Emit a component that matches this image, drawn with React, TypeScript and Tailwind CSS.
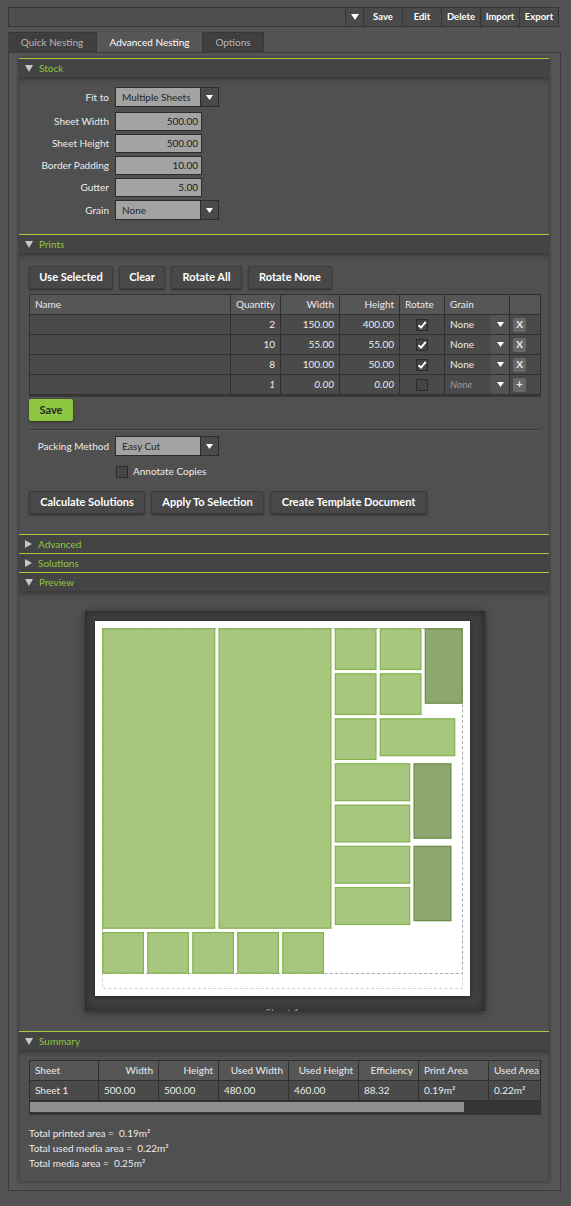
import React from "react";

type Piece = { x: number; y: number; w: number; h: number; rot?: boolean };

// nesting result in sheet millimetres (sheet is 500 x 500)
const pieces: Piece[] = [
  { x: 10, y: 10, w: 150, h: 400 },
  { x: 165, y: 10, w: 150, h: 400 },
  { x: 320, y: 10, w: 55, h: 55 },
  { x: 380, y: 10, w: 55, h: 55 },
  { x: 320, y: 70, w: 55, h: 55 },
  { x: 380, y: 70, w: 55, h: 55 },
  { x: 320, y: 130, w: 55, h: 55 },
  { x: 380, y: 130, w: 100, h: 50 },
  { x: 440, y: 10, w: 50, h: 100, rot: true },
  { x: 320, y: 190, w: 100, h: 50 },
  { x: 320, y: 245, w: 100, h: 50 },
  { x: 320, y: 300, w: 100, h: 50 },
  { x: 320, y: 355, w: 100, h: 50 },
  { x: 425, y: 190, w: 50, h: 100, rot: true },
  { x: 425, y: 300, w: 50, h: 100, rot: true },
  { x: 10, y: 415, w: 55, h: 55 },
  { x: 70, y: 415, w: 55, h: 55 },
  { x: 130, y: 415, w: 55, h: 55 },
  { x: 190, y: 415, w: 55, h: 55 },
  { x: 250, y: 415, w: 55, h: 55 },
];

const prints = [
  { qty: "2", w: "150.00", h: "400.00" },
  { qty: "10", w: "55.00", h: "55.00" },
  { qty: "8", w: "100.00", h: "50.00" },
];

function DownTri({ c = "#ffffff", w = 8, h = 6 }: { c?: string; w?: number; h?: number }) {
  return (
    <svg width={w} height={h} viewBox={`0 0 ${w} ${h}`}>
      <path d={`M0 0H${w}L${w / 2} ${h}Z`} fill={c} />
    </svg>
  );
}

function RightTri() {
  return (
    <svg width="7" height="8" viewBox="0 0 7 8">
      <path d="M0 0L7 4L0 8Z" fill="#c8c8c8" />
    </svg>
  );
}

function Check({ on }: { on?: boolean }) {
  return (
    <span className="flex h-[12px] w-[12px] items-center justify-center border border-[#2b2b2b] bg-[#454545]">
      {on && (
        <svg width="10" height="10" viewBox="0 0 10 10">
          <path d="M1.5 5.2L4 7.6L8.8 1.8" stroke="#fff" strokeWidth="2" fill="none" />
        </svg>
      )}
    </span>
  );
}

function Section({ title, open = true, h, children }: { title: string; open?: boolean; h?: string; children?: React.ReactNode }) {
  return (
    <div>
      <div className="flex h-[19px] items-center gap-[6px] border-t border-[#a3cc3a] bg-[#444444] pl-[6px] text-[#8dc63f]">
        {open ? <DownTri c="#c8c8c8" w={8} h={7} /> : <RightTri />}
        <span>{title}</span>
      </div>
      {open && <div className={`bg-[#505050] shadow-[inset_0_5px_5px_-3px_rgba(0,0,0,0.35)] ${h}`}>{children}</div>}
    </div>
  );
}

function Select({ value }: { value: string }) {
  return (
    <div className="flex h-[20px] w-[104px] border border-[#2c2c2c]">
      <div className="flex flex-1 items-center bg-[#a3a3a3] pl-[6px] text-[#262626]">{value}</div>
      <div className="flex w-[18px] items-center justify-center border-l border-[#2c2c2c] bg-[#4a4a4a]">
        <DownTri w={7} h={5} />
      </div>
    </div>
  );
}

function Field({ value }: { value: string }) {
  return (
    <div className="flex h-[19px] w-[87px] items-center justify-end border border-[#2c2c2c] bg-[#a3a3a3] pr-[3px] text-[#1c1c1c]">
      {value}
    </div>
  );
}

function Row({ label, children, className = "" }: { label: string; children: React.ReactNode; className?: string }) {
  return (
    <div className={`flex items-center gap-[6px] ${className}`}>
      <div className="w-[90px] text-right">{label}</div>
      {children}
    </div>
  );
}

function Btn({ w, children }: { w: string; children: React.ReactNode }) {
  return (
    <div
      className={`flex h-[23px] ${w} items-center justify-center rounded-[2px] border border-[#3c3c3c] bg-[#484848] text-[11px] font-bold text-white shadow-[0_1px_2px_rgba(0,0,0,0.45)]`}
    >
      {children}
    </div>
  );
}

const cell = "flex h-[20px] items-center whitespace-nowrap border-r border-b border-[#303030] px-[5px]";

function PrintsTable() {
  return (
    <div className="grid w-[512px] grid-cols-[201px_50px_59px_60px_45px_65px_31px] border-l border-t border-[#303030] shadow-[0_2px_0_#3a3a3a]">
      <div className={`${cell} bg-[#565656]`}>Name</div>
      <div className={`${cell} justify-end bg-[#565656]`}>Quantity</div>
      <div className={`${cell} justify-end bg-[#565656]`}>Width</div>
      <div className={`${cell} justify-end bg-[#565656]`}>Height</div>
      <div className={`${cell} bg-[#565656]`}>Rotate</div>
      <div className={`${cell} bg-[#565656]`}>Grain</div>
      <div className={`${cell} bg-[#565656]`} />

      {prints.map((p) => (
        <React.Fragment key={p.qty}>
          <div className={`${cell} bg-[#4a4a4a]`} />
          <div className={`${cell} justify-end bg-[#4a4a4a]`}>{p.qty}</div>
          <div className={`${cell} justify-end bg-[#4a4a4a]`}>{p.w}</div>
          <div className={`${cell} justify-end bg-[#4a4a4a]`}>{p.h}</div>
          <div className={`${cell} justify-center bg-[#4a4a4a]`}>
            <Check on />
          </div>
          <div className={`${cell} !pr-0 bg-[#4a4a4a]`}>
            <span className="flex-1">None</span>
            <span className="flex h-full w-[18px] items-center justify-center bg-[#535353]">
              <DownTri w={7} h={5} />
            </span>
          </div>
          <div className={`${cell} !px-[3px] bg-[#4a4a4a]`}>
            <span className="flex h-[14px] w-[13px] items-center justify-center rounded-[2px] bg-[#676767] text-[10px] font-bold">X</span>
          </div>
        </React.Fragment>
      ))}

      <div className={`${cell} bg-[#4a4a4a]`} />
      <div className={`${cell} justify-end bg-[#4a4a4a]`}>
        <em className="italic">1</em>
      </div>
      <div className={`${cell} justify-end bg-[#4a4a4a]`}>
        <em className="italic">0.00</em>
      </div>
      <div className={`${cell} justify-end bg-[#4a4a4a]`}>
        <em className="italic">0.00</em>
      </div>
      <div className={`${cell} justify-center bg-[#4a4a4a]`}>
        <Check />
      </div>
      <div className={`${cell} !pr-0 bg-[#4a4a4a]`}>
        <em className="flex-1 italic text-[#9a9a9a]">None</em>
        <span className="flex h-full w-[18px] items-center justify-center bg-[#535353]">
          <DownTri w={7} h={5} />
        </span>
      </div>
      <div className={`${cell} !px-[3px] bg-[#4a4a4a]`}>
        <span className="flex h-[14px] w-[13px] items-center justify-center rounded-[2px] bg-[#676767] text-[11px] font-bold">+</span>
      </div>
    </div>
  );
}

function SheetPreview() {
  return (
    <div className="ml-[66px] h-[400px] w-[400px] overflow-hidden bg-[#404040] pt-[10px] shadow-[inset_0_0_10px_rgba(0,0,0,0.45),0_2px_8px_rgba(0,0,0,0.45)]">
      <div className="ml-[10px] h-[375px] w-[375px] bg-white shadow-[0_1px_4px_rgba(0,0,0,0.5)]">
        <svg width="375" height="375" viewBox="0 0 500 500">
          <rect x="10" y="10" width="480" height="480" fill="none" stroke="#cfcfcf" strokeWidth="1.3" strokeDasharray="4 3" />
          <rect x="10" y="10" width="480" height="460" fill="none" stroke="#a8a8a8" strokeWidth="1.3" strokeDasharray="4 3" />
          {pieces.map((p, i) => (
            <rect
              key={i}
              x={p.x + 0.4}
              y={p.y + 0.4}
              width={p.w - 0.8}
              height={p.h - 0.8}
              fill={p.rot ? "#8ea66f" : "#a6c77d"}
              stroke={p.rot ? "#6b8a44" : "#86b24f"}
              strokeWidth="1.6"
            />
          ))}
        </svg>
      </div>
      <div className="ml-[10px] mt-[9px] w-[375px] text-center text-[#9a9a9a]">Sheet 1</div>
    </div>
  );
}

const sumHead = "flex h-[20px] items-center whitespace-nowrap border-r border-b border-[#303030] bg-[#565656] px-[5px]";
const sumCell = "flex h-[20px] items-center whitespace-nowrap border-r border-b border-[#303030] bg-[#4a4a4a] px-[5px]";

function SummaryTable() {
  return (
    <div className="w-[512px] overflow-hidden border border-[#2e2e2e] shadow-[0_1px_0_#3a3a3a]">
      <div className="grid w-[560px] grid-cols-[69px_60px_60px_70px_70px_60px_70px_70px]">
        <div className={sumHead}>Sheet</div>
        <div className={`${sumHead} justify-end`}>Width</div>
        <div className={`${sumHead} justify-end`}>Height</div>
        <div className={`${sumHead} justify-end`}>Used Width</div>
        <div className={`${sumHead} justify-end`}>Used Height</div>
        <div className={`${sumHead} justify-end`}>Efficiency</div>
        <div className={sumHead}>Print Area</div>
        <div className={sumHead}>Used Area</div>
        <div className={sumCell}>Sheet 1</div>
        <div className={sumCell}>500.00</div>
        <div className={sumCell}>500.00</div>
        <div className={sumCell}>480.00</div>
        <div className={sumCell}>460.00</div>
        <div className={sumCell}>88.32</div>
        <div className={sumCell}>0.19m²</div>
        <div className={sumCell}>0.22m²</div>
      </div>
      <div className="h-[12px] bg-[#363636] pt-[1px]">
        <div className="h-[10px] w-[434px] bg-[#8f8f8f]" />
      </div>
    </div>
  );
}

export default function App() {
  return (
    <div className="min-h-[1206px] w-[571px] bg-[#535353] pt-[7px] font-['Lato',sans-serif] text-[10px] text-[#ececec]">
      {/* preset bar */}
      <div className="ml-[8px] flex h-[20px]">
        <div className="w-[338px] border border-[#353535] bg-[#4e4e4e]" />
        <div className="flex w-[18px] items-center justify-center border border-l-0 border-[#353535] bg-[#4a4a4a]">
          <DownTri w={8} h={6} />
        </div>
        {["Save", "Edit", "Delete", "Import", "Export"].map((t) => (
          <div
            key={t}
            className="flex w-[39px] items-center justify-center border border-l-0 border-[#353535] bg-[#4a4a4a] text-[9.5px] font-bold text-white"
          >
            {t}
          </div>
        ))}
      </div>

      {/* tabs */}
      <div className="ml-[8px] mt-[5px] flex h-[20px]">
        <div className="flex w-[89px] items-center justify-center border-t border-r border-[#383838] bg-[#3f3f3f] text-[#b8b8b8]">Quick Nesting</div>
        <div className="flex w-[105px] items-center justify-center bg-[#565656] text-white">Advanced Nesting</div>
        <div className="flex w-[62px] items-center justify-center border-t border-l border-r border-[#383838] bg-[#3f3f3f] text-[#b8b8b8]">Options</div>
      </div>

      <div className="ml-[8px] w-[553px] border border-[#3a3a3a] bg-[#565656] pb-[9px] pl-[10px] pr-[11px] pt-[5px]">
        <div className="shadow-[0_0_4px_rgba(0,0,0,0.45)]">
          <Section title="Stock" h="h-[157px]">
            <div className="flex flex-col pt-[10px]">
              <Row label="Fit to">
                <Select value="Multiple Sheets" />
              </Row>
              <Row label="Sheet Width" className="mt-[5px]">
                <Field value="500.00" />
              </Row>
              <Row label="Sheet Height" className="mt-[3px]">
                <Field value="500.00" />
              </Row>
              <Row label="Border Padding" className="mt-[3px]">
                <Field value="10.00" />
              </Row>
              <Row label="Gutter" className="mt-[3px]">
                <Field value="5.00" />
              </Row>
              <Row label="Grain" className="mt-[3px]">
                <Select value="None" />
              </Row>
            </div>
          </Section>

          <Section title="Prints" h="h-[281px]">
            <div className="pl-[10px] pt-[13px]">
              <div className="flex gap-[6px]">
                <Btn w="w-[84px]">Use Selected</Btn>
                <Btn w="w-[46px]">Clear</Btn>
                <Btn w="w-[71px]">Rotate All</Btn>
                <Btn w="w-[84px]">Rotate None</Btn>
              </div>
              <div className="mt-[5px]">
                <PrintsTable />
              </div>
              <div className="mt-[4px] flex h-[22px] w-[44px] items-center justify-center rounded-[2px] bg-[#8dc63f] text-[11px] font-bold text-[#262626] shadow-[0_1px_2px_rgba(0,0,0,0.45)]">
                Save
              </div>
              <div className="mt-[8px] h-[2px] w-[512px] border-t border-[#383838] border-b border-b-[#5a5a5a]" />
            </div>
            <div className="mt-[5px]">
              <Row label="Packing Method">
                <Select value="Easy Cut" />
              </Row>
              <div className="ml-[97px] mt-[8px] flex items-center gap-[5px]">
                <Check />
                <span>Annotate Copies</span>
              </div>
            </div>
            <div className="ml-[10px] mt-[12px] flex gap-[6px]">
              <Btn w="w-[116px]">Calculate Solutions</Btn>
              <Btn w="w-[113px]">Apply To Selection</Btn>
              <Btn w="w-[157px]">Create Template Document</Btn>
            </div>
          </Section>

          <Section title="Advanced" open={false} />
          <Section title="Solutions" open={false} />

          <Section title="Preview" h="h-[440px]">
            <div className="pt-[20px]">
              <SheetPreview />
            </div>
          </Section>

          <Section title="Summary" h="h-[131px]">
            <div className="pl-[10px] pt-[10px]">
              <SummaryTable />
              <div className="mt-[12px] whitespace-pre leading-[15px]">
                <div>Total printed area =  0.19m²</div>
                <div>Total used media area =  0.22m²</div>
                <div>Total media area =  0.25m²</div>
              </div>
            </div>
          </Section>
        </div>
      </div>
    </div>
  );
}
